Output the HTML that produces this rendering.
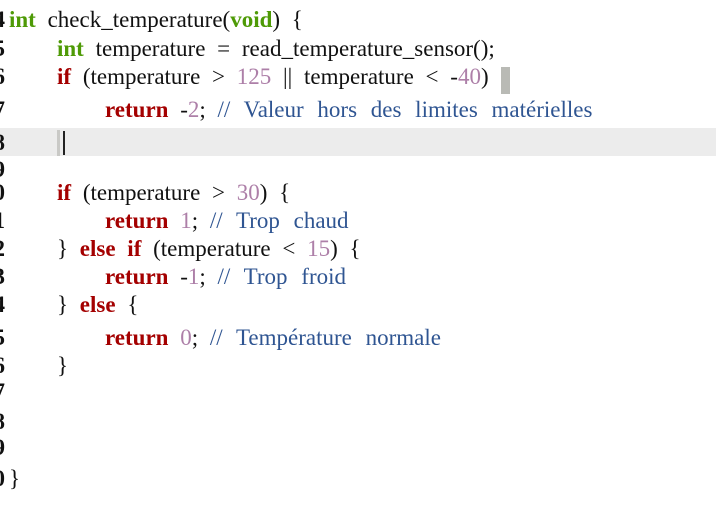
<!DOCTYPE html>
<html><head><meta charset="utf-8"><style>
html,body{margin:0;padding:0;background:#fff;width:716px;height:530px;overflow:hidden;position:relative;font-family:"Liberation Serif",serif;font-size:23px;color:#111;}
.l{position:absolute;white-space:pre;line-height:24px;height:24px;word-spacing:6px;}
.n{position:absolute;left:-7px;width:12px;text-align:right;line-height:24px;font-weight:bold;color:#111;}
.t{color:#4e9a06;font-weight:bold}
.k{color:#a40000;font-weight:bold}
.m{color:#ad7fa8}
.c{color:#2f5592;word-spacing:8px}
.hl{position:absolute;left:0;top:128px;width:716px;height:28px;background:#ececec}
</style></head><body>
<div class="hl"></div>
<div style="position:absolute;left:57px;top:130px;width:3px;height:26px;background:#c9c9c6"></div>
<div style="position:absolute;left:63px;top:131px;width:2px;height:24px;background:#222"></div>
<div style="position:absolute;left:501px;top:67px;width:9px;height:27px;background:#b9bab5"></div>

<div class="n" style="top:8px">4</div>
<div class="n" style="top:37px">5</div>
<div class="n" style="top:65px">6</div>
<div class="n" style="top:98px">7</div>
<div class="n" style="top:131px">8</div>
<div class="n" style="top:158px">9</div>
<div class="n" style="top:181px">0</div>
<div class="n" style="top:209px">1</div>
<div class="n" style="top:237px">2</div>
<div class="n" style="top:265px">3</div>
<div class="n" style="top:293px">4</div>
<div class="n" style="top:326px">5</div>
<div class="n" style="top:354px">6</div>
<div class="n" style="top:380px">7</div>
<div class="n" style="top:410px">8</div>
<div class="n" style="top:436px">9</div>
<div class="n" style="top:467px">0</div>

<div class="l" style="left:9px;top:8px"><span class="t">int</span> check_temperature(<span class="t">void</span>) {</div>
<div class="l" style="left:57px;top:37px"><span class="t">int</span> temperature = read_temperature_sensor();</div>
<div class="l" style="left:57px;top:65px"><span class="k">if</span> (temperature &gt; <span class="m">125</span> || temperature &lt; -<span class="m">40</span>)</div>
<div class="l" style="left:105px;top:98px"><span class="k">return</span> -<span class="m">2</span>; <span class="c">// Valeur hors des limites matérielles</span></div>
<div class="l" style="left:57px;top:181px"><span class="k">if</span> (temperature &gt; <span class="m">30</span>) {</div>
<div class="l" style="left:105px;top:209px"><span class="k">return</span> <span class="m">1</span>; <span class="c">// Trop chaud</span></div>
<div class="l" style="left:57px;top:237px">} <span class="k">else if</span> (temperature &lt; <span class="m">15</span>) {</div>
<div class="l" style="left:105px;top:265px"><span class="k">return</span> -<span class="m">1</span>; <span class="c">// Trop froid</span></div>
<div class="l" style="left:57px;top:293px">} <span class="k">else</span> {</div>
<div class="l" style="left:105px;top:326px"><span class="k">return</span> <span class="m">0</span>; <span class="c">// Température normale</span></div>
<div class="l" style="left:57px;top:354px">}</div>
<div class="l" style="left:9px;top:467px">}</div>
</body></html>
